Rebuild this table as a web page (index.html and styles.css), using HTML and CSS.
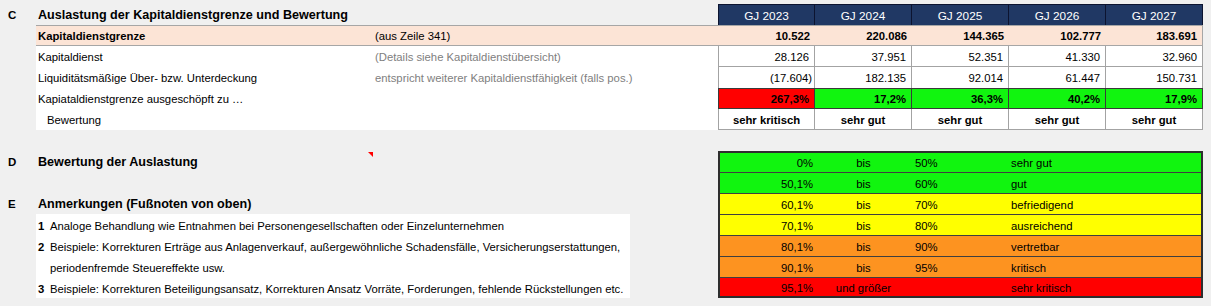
FILE: index.html
```html
<!DOCTYPE html>
<html lang="de">
<head>
<meta charset="utf-8">
<title>Kapitaldienstgrenze</title>
<link rel="stylesheet" href="styles.css">
</head>
<body>
<div class="page">
  <section class="sec-c">
    <div class="letter">C</div>
    <div class="tbl">
      <div class="row head">
        <div class="cell title">Auslastung der Kapitaldienstgrenze und Bewertung</div>
        <div class="cell gj first">GJ 2023</div>
        <div class="cell gj">GJ 2024</div>
        <div class="cell gj">GJ 2025</div>
        <div class="cell gj">GJ 2026</div>
        <div class="cell gj">GJ 2027</div>
      </div>
      <div class="tbody">
        <div class="row peach">
          <div class="cell label">Kapitaldienstgrenze</div>
          <div class="cell note">(aus Zeile 341)</div>
          <div class="cell num">10.522</div>
          <div class="cell num">220.086</div>
          <div class="cell num">144.365</div>
          <div class="cell num">102.777</div>
          <div class="cell num">183.691</div>
        </div>
        <div class="row">
          <div class="cell label">Kapitaldienst</div>
          <div class="cell note grey">(Details siehe Kapitaldienstübersicht)</div>
          <div class="cell num first">28.126</div>
          <div class="cell num">37.951</div>
          <div class="cell num">52.351</div>
          <div class="cell num">41.330</div>
          <div class="cell num">32.960</div>
        </div>
        <div class="row liq">
          <div class="cell label">Liquiditätsmäßige Über- bzw. Unterdeckung</div>
          <div class="cell note grey">entspricht weiterer Kapitaldienstfähigkeit (falls pos.)</div>
          <div class="cell num first neg">(17.604)</div>
          <div class="cell num">182.135</div>
          <div class="cell num">92.014</div>
          <div class="cell num">61.447</div>
          <div class="cell num">150.731</div>
        </div>
        <div class="row rate">
          <div class="cell label">Kapiataldienstgrenze ausgeschöpft zu …</div>
          <div class="cell note"></div>
          <div class="cell num first red">267,3%</div>
          <div class="cell num green">17,2%</div>
          <div class="cell num green">36,3%</div>
          <div class="cell num green">40,2%</div>
          <div class="cell num green">17,9%</div>
        </div>
        <div class="row grade">
          <div class="cell label indent">Bewertung</div>
          <div class="cell note"></div>
          <div class="cell num first">sehr kritisch</div>
          <div class="cell num">sehr gut</div>
          <div class="cell num">sehr gut</div>
          <div class="cell num">sehr gut</div>
          <div class="cell num">sehr gut</div>
        </div>
      </div>
    </div>
  </section>

  <section class="sec-bottom">
    <div class="letter l-d">D</div>
    <div class="sub s-d">Bewertung der Auslastung</div>
    <div class="letter l-e">E</div>
    <div class="sub s-e">Anmerkungen (Fußnoten von oben)</div>
    <div class="notes">
      <span class="n">1</span><span class="t">Analoge Behandlung wie Entnahmen bei Personengesellschaften oder Einzelunternehmen</span>
      <span class="n">2</span><span class="t">Beispiele: Korrekturen Erträge aus Anlagenverkauf, außergewöhnliche Schadensfälle, Versicherungserstattungen,</span>
      <span class="n"></span><span class="t">periodenfremde Steuereffekte usw.</span>
      <span class="n">3</span><span class="t">Beispiele: Korrekturen Beteiligungsansatz, Korrekturen Ansatz Vorräte, Forderungen, fehlende Rückstellungen etc.</span>
    </div>
    <div class="legend">
      <div class="lrow g"><span class="from">0%</span><span class="mid">bis</span><span class="to">50%</span><span class="lbl">sehr gut</span></div>
      <div class="lrow g"><span class="from">50,1%</span><span class="mid">bis</span><span class="to">60%</span><span class="lbl">gut</span></div>
      <div class="lrow y"><span class="from">60,1%</span><span class="mid">bis</span><span class="to">70%</span><span class="lbl">befriedigend</span></div>
      <div class="lrow y"><span class="from">70,1%</span><span class="mid">bis</span><span class="to">80%</span><span class="lbl">ausreichend</span></div>
      <div class="lrow o"><span class="from">80,1%</span><span class="mid">bis</span><span class="to">90%</span><span class="lbl">vertretbar</span></div>
      <div class="lrow o"><span class="from">90,1%</span><span class="mid">bis</span><span class="to">95%</span><span class="lbl">kritisch</span></div>
      <div class="lrow r"><span class="from">95,1%</span><span class="mid">und größer</span><span class="to"></span><span class="lbl">sehr kritisch</span></div>
    </div>
  </section>
</div>
</body>
</html>
```
FILE: styles.css
```css
* {
  box-sizing: border-box;
  margin: 0;
  padding: 0;
}

body {
  margin: 0;
  background: #f0f0f0;
  font-family: "Liberation Sans", Arial, sans-serif;
  font-size: 11.3px;
  color: #000;
}

.page {
  padding-top: 4px;
}

/* ---------- Section C ---------- */
.sec-c {
  display: flex;
}

.letter {
  width: 36px;
  flex: none;
  height: 21px;
  padding: 1px 0 0 8px;
  display: flex;
  align-items: center;
  font-weight: bold;
  font-size: 11.5px;
}

.tbl {
  width: 1167px;
}

.tbody {
  background: #fff;
}

.row {
  display: grid;
  grid-template-columns: 337px 345px repeat(5, 97px);
  height: 21px;
}

.cell {
  display: flex;
  align-items: center;
  padding: 1px 2px 0;
  white-space: nowrap;
  overflow: hidden;
}

.title {
  grid-column: span 2;
  font-weight: bold;
  font-size: 12.6px;
}

.gj {
  background: #203864;
  color: #fff;
  justify-content: center;
  font-size: 11.8px;
  border-top: 1px solid #0c1430;
  border-right: 1px solid #0c1430;
}

.gj.first {
  border-left: 1px solid #0c1430;
}

.indent {
  padding-left: 11px;
}

.grey {
  color: #808080;
}

.num {
  justify-content: flex-end;
  padding-right: 5px;
  border-right: 1px solid #a3a3a3;
  border-bottom: 1px solid #a3a3a3;
}

.num.first {
  border-left: 1px solid #a3a3a3;
}

.num.neg {
  padding-right: 2px;
}

.peach {
  background: #fce4d6;
  border-top: 1px solid #a6a6a6;
  border-bottom: 1px solid #a6a6a6;
  font-weight: bold;
}

.peach .note {
  font-weight: normal;
}

.peach .num {
  border: 0;
}

.peach .num:last-child {
  border-right: 1px solid #a6a6a6;
}

.liq .num {
  border-bottom: 0;
}

.rate .num {
  font-weight: bold;
  border-top: 1px solid #3a3a3a;
  border-bottom: 1px solid #3a3a3a;
  border-right-color: #3a3a3a;
}

.rate .num.first {
  border-left-color: #3a3a3a;
}

.red {
  background: #ff0000;
}

.green {
  background: #11f50f;
}

.grade .num {
  justify-content: center;
  padding-right: 2px;
  font-weight: bold;
}

/* ---------- Sections D / E ---------- */
.sec-bottom {
  display: grid;
  grid-template-columns: 36px 682px 485px;
  grid-template-rows: repeat(7, 21px);
  margin-top: 21px;
}

.l-d { grid-column: 1; grid-row: 1; }
.l-e { grid-column: 1; grid-row: 3; }

.sub {
  grid-column: 2;
  display: flex;
  align-items: center;
  padding: 1px 2px 0;
  font-weight: bold;
  font-size: 12.6px;
  white-space: nowrap;
}

.s-d {
  grid-row: 1;
  width: 337px;
  position: relative;
}

.s-d::after {
  content: "";
  position: absolute;
  top: 1px;
  right: 0;
  border-top: 5px solid #ff0000;
  border-left: 5px solid transparent;
}

.s-e {
  grid-row: 3;
}

.notes {
  grid-column: 2;
  grid-row: 4 / span 4;
  width: 594px;
  background: #fff;
  display: grid;
  grid-template-columns: 14px auto;
  grid-auto-rows: 21px;
}

.notes span {
  display: flex;
  align-items: center;
  padding-top: 2px;
  white-space: nowrap;
}

.notes .n {
  padding-left: 2px;
  font-weight: bold;
}

.legend {
  grid-column: 3;
  grid-row: 1 / span 7;
  align-self: start;
  border: 2px solid #2e2e2e;
}

.lrow {
  display: grid;
  grid-template-columns: 95px 97px 97px 1fr;
  height: 21px;
  border-top: 1px solid #3f3f3f;
}

.lrow:first-child {
  border-top: 0;
  height: 19px;
}

.lrow:last-child {
  height: 19px;
}

.lrow span {
  display: flex;
  align-items: center;
  padding-top: 1px;
  white-space: nowrap;
}

.lrow .from {
  justify-content: flex-end;
  padding-right: 2px;
}

.lrow .mid {
  justify-content: center;
}

.lrow .to,
.lrow .lbl {
  padding-left: 3px;
}

.lrow .lbl {
  padding-left: 2px;
}

.g { background: #11f50f; }
.y { background: #ffff00; }
.o { background: #fd9320; }
.r { background: #ff0000; }
```
